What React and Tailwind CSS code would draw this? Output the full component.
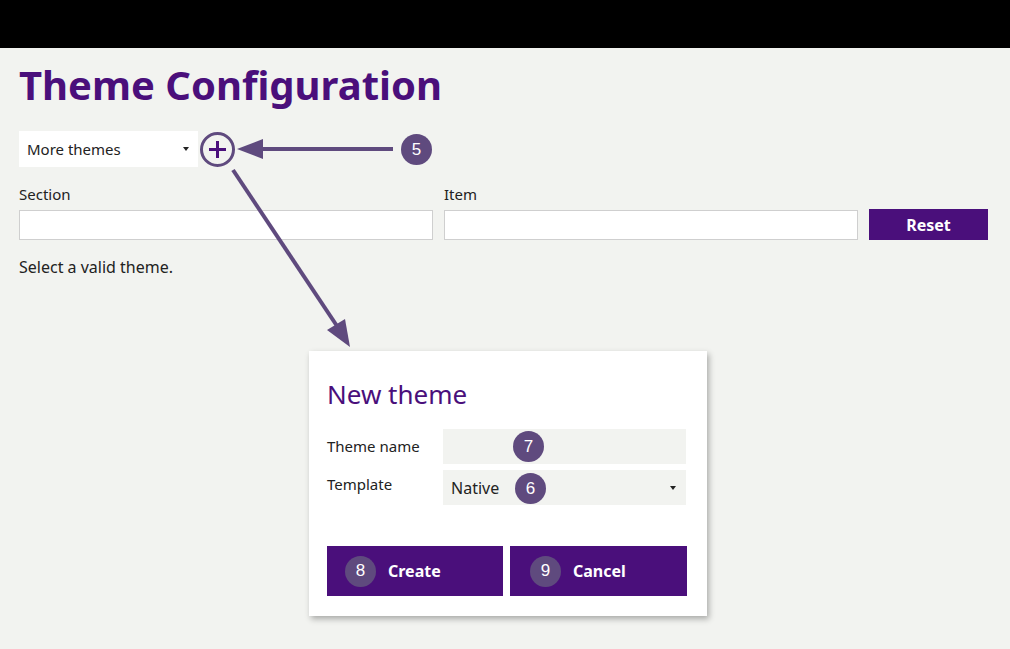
import React from "react";

const font = { fontFamily: '"Noto Sans", "Open Sans", sans-serif' };

function Badge({ n, className = "" }) {
  return (
    <span
      className={`absolute flex h-[31px] w-[31px] items-center justify-center rounded-full bg-[#5f4a7e] text-[17px] text-white ${className}`}
      style={{ fontFamily: '"Liberation Sans", Arial, sans-serif' }}
    >
      {n}
    </span>
  );
}

function Caret() {
  return (
    <svg width="8" height="4" viewBox="0 0 8 4" className="shrink-0">
      <path d="M1 0h6L4 4z" fill="#222" />
    </svg>
  );
}

export default function App() {
  return (
    <div className="relative h-[649px] w-[1010px] overflow-hidden bg-[#f2f3f0]" style={font}>
      <div className="h-[48px] bg-black" />

      <div className="px-[19px]">
        <h1 className="mt-[11px] text-[40px] font-bold leading-[52px] text-[#4a0f7b]">
          Theme Configuration
        </h1>

        <div className="mt-[20px] flex items-center gap-[2px]">
          <div className="flex h-[36px] w-[179px] items-center justify-between bg-white pl-[8px] pr-[8px] text-[15px] text-[#222]">
            <span>More themes</span>
            <Caret />
          </div>
          <div className="flex h-[35px] w-[35px] items-center justify-center rounded-full border-[3px] border-[#5f4a7e]">
            <svg width="19" height="19" viewBox="0 0 19 19">
              <path d="M9.5 1v17M1 9.5h17" stroke="#4a0f7b" strokeWidth="3" />
            </svg>
          </div>
        </div>

        <div className="mt-[17px] flex items-end gap-[11px]">
          <label className="flex w-[414px] flex-col gap-[6px] text-[15px] text-[#222]">
            <span className="leading-[20px]">Section</span>
            <div className="h-[30px] border border-[#cfcfcf] bg-white" />
          </label>
          <label className="flex w-[414px] flex-col gap-[6px] text-[15px] text-[#222]">
            <span className="leading-[20px]">Item</span>
            <div className="h-[30px] border border-[#cfcfcf] bg-white" />
          </label>
          <button className="h-[31px] w-[119px] bg-[#4a0f7b] text-[16px] font-bold text-white">
            Reset
          </button>
        </div>

        <p className="mt-[15px] text-[16px] text-[#222]">Select a valid theme.</p>
      </div>

      {/* modal */}
      <div className="absolute left-[309px] top-[351px] h-[265px] w-[398px] bg-white px-[18px] shadow-[2px_3px_6px_rgba(0,0,0,0.3)]">
        <h2 className="mt-[26px] text-[26px] leading-[34px] text-[#4a0f7b]">New theme</h2>
        <div className="mt-[18px] flex items-center">
          <span className="w-[116px] text-[15px] text-[#222]">Theme name</span>
          <div className="relative h-[35px] w-[243px] bg-[#f2f3f0]">
            <Badge n="7" className="left-[70px] top-[2px]" />
          </div>
        </div>
        <div className="mt-[6px] flex items-center">
          <span className="-mt-[6px] w-[116px] text-[15px] text-[#222]">Template</span>
          <div className="relative flex h-[35px] w-[243px] items-center justify-between bg-[#f2f3f0] pl-[8px] pr-[9px] text-[16px] text-[#222]">
            <span>Native</span>
            <Caret />
            <Badge n="6" className="left-[72px] top-[3px]" />
          </div>
        </div>
        <div className="mt-[41px] flex gap-[7px]">
          <button className="flex h-[50px] w-[176px] items-center gap-[12px] bg-[#4a0f7b] pl-[18px] text-[16px] font-bold text-white">
            <span
              className="flex h-[31px] w-[31px] items-center justify-center rounded-full bg-[#5f4a7e] text-[17px] font-normal"
              style={{ fontFamily: '"Liberation Sans", Arial, sans-serif' }}
            >
              8
            </span>
            Create
          </button>
          <button className="flex h-[50px] w-[177px] items-center gap-[12px] bg-[#4a0f7b] pl-[20px] text-[16px] font-bold text-white">
            <span
              className="flex h-[31px] w-[31px] items-center justify-center rounded-full bg-[#5f4a7e] text-[17px] font-normal"
              style={{ fontFamily: '"Liberation Sans", Arial, sans-serif' }}
            >
              9
            </span>
            Cancel
          </button>
        </div>
      </div>

      {/* annotation arrows */}
      <svg className="pointer-events-none absolute left-0 top-0" width="1010" height="649">
        <line x1="393" y1="149" x2="258" y2="149" stroke="#5f4a7e" strokeWidth="4" />
        <path d="M237 149 L263 139 L263 159 Z" fill="#5f4a7e" />
        <line x1="233" y1="170" x2="337" y2="326" stroke="#5f4a7e" strokeWidth="4" />
        <path d="M350 347 L327 330 L345 319 Z" fill="#5f4a7e" />
      </svg>
      <Badge n="5" className="left-[401px] top-[134px]" />
    </div>
  );
}
